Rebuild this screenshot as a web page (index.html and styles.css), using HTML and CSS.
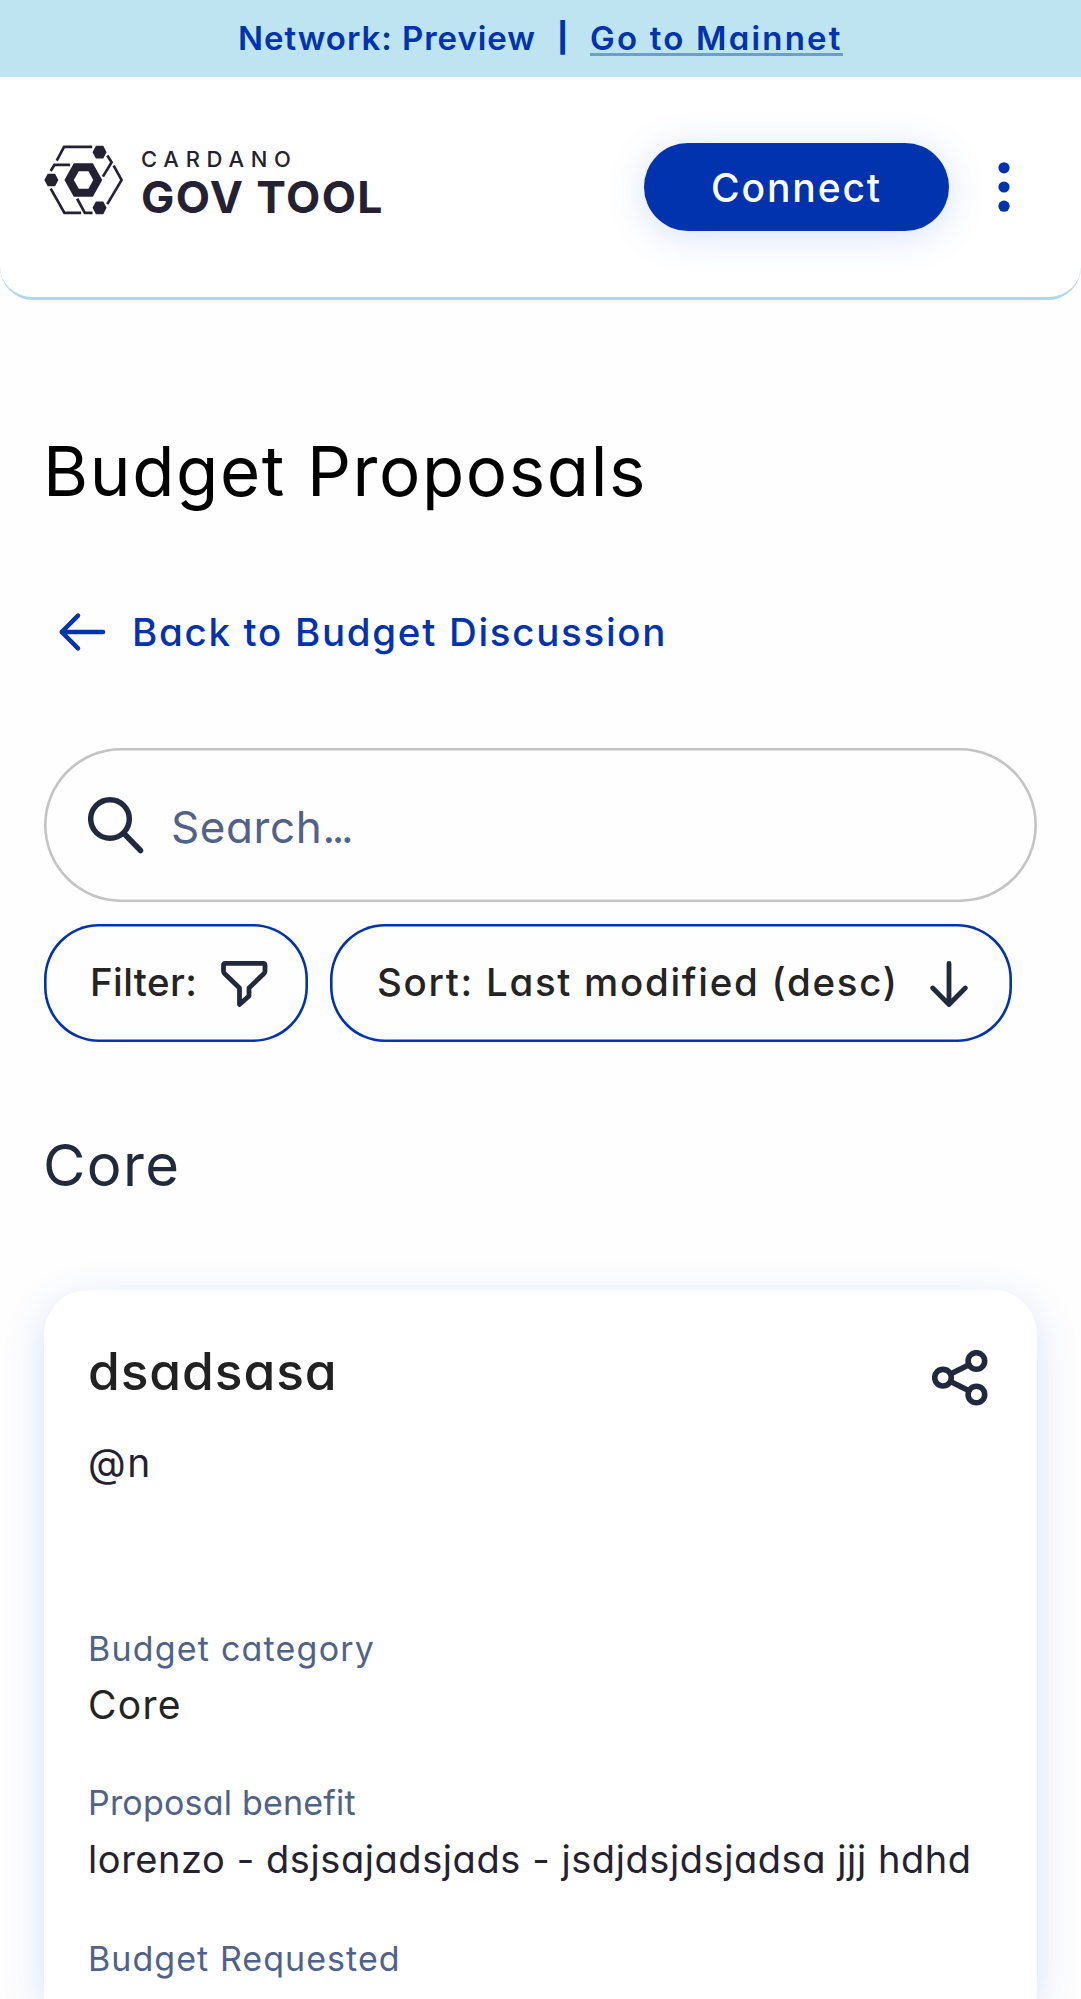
FILE: index.html
```html
<!DOCTYPE html>
<html lang="en">
<head>
<meta charset="utf-8">
<title>Budget Proposals</title>
<link rel="stylesheet" href="styles.css">
</head>
<body>
<div class="banner"><span class="network">Network: Preview</span><span class="divider">|</span><a class="mainnet">Go to Mainnet</a></div>
<header class="header">
  <div class="logo">
    <svg class="logo-mark" viewBox="132 76 236 208" fill="#242232">
      <path fill-rule="evenodd" d="M193 180 221 130H278L306 180 278 230H221ZM221 180 236 206H265L279 180 265 154H236Z"/>
      <path d="M277 97 287 78H309L319 97 309 116H287ZM133 180 143 161H165L175 180 165 199H143ZM277 263 287 244H309L319 263 309 282H287Z"/>
      <path class="logo-lines" d="M170 122 192 81H276M152 153 163 135H210M321 107 334 127 308 170M340 137 364 180 321 252M152 206 193 278H243M231 236 254 278H277"/>
    </svg>
    <div class="logo-text"><span class="logo-top">CARDANO</span><span class="logo-name">GOV TOOL</span></div>
  </div>
  <div class="actions">
    <button class="connect">Connect</button>
    <svg class="dots" viewBox="0 0 12 50" fill="#0033ad"><circle cx="6" cy="5.8" r="5.6"/><circle cx="6" cy="25" r="5.6"/><circle cx="6" cy="44.2" r="5.6"/></svg>
  </div>
</header>
<main class="main">
  <h1 class="title">Budget Proposals</h1>
  <a class="back">
    <svg class="back-icon" viewBox="0 0 48 40"><path d="M45 20H3.700M20 3.700 3.700 20 20 36.300"/></svg>
    <span>Back to Budget Discussion</span>
  </a>
  <div class="search">
    <svg class="search-icon" viewBox="0 0 56 58"><circle cx="22" cy="23" r="19.300"/><path d="M36.500 38 52.500 54.500"/></svg>
    <span class="search-label">Search<span class="dots-text">...</span></span>
  </div>
  <div class="chips">
    <button class="chip filter"><span class="filter-label">Filter:</span>
      <svg class="chip-icon" width="48" viewBox="0 0 48 48"><path d="M5.500 4.300H43Q45 4.300 45 6.300V12Q45 13.500 44 14.500L29 29V37L19.500 45.500V29L4.500 14.500Q3.500 13.500 3.500 12V6.300Q3.500 4.300 5.500 4.300Z"/></svg></button>
    <button class="chip sort"><span class="sort-label">Sort: Last modified (desc)</span>
      <svg class="chip-icon" width="38" viewBox="0 0 38 48"><path d="M19 4.500V45.500M2.700 29 19 45.500 35.300 29"/></svg></button>
  </div>
  <h2 class="section">Core</h2>
  <article class="card">
    <div class="card-head"><h3 class="card-title">dsadsasa</h3>
      <svg class="share" viewBox="0 0 56 56"><circle cx="11" cy="27.700" r="8.300"/><circle cx="44.400" cy="11" r="8.300"/><circle cx="44.400" cy="44.500" r="8.300"/><path d="M19 23.700 37 14.800M19 31.700 37 40.700"/></svg></div>
    <p class="author">@n</p>
    <dl class="fields">
      <dt class="label category">Budget category</dt>
      <dd class="value neutral">Core</dd>
      <dt class="label benefit">Proposal benefit</dt>
      <dd class="value summary">lorenzo - dsjsajadsjads - jsdjdsjdsjadsa jjj hdhd</dd>
      <dt class="label requested">Budget Requested</dt>
    </dl>
  </article>
</main>
</body>
</html>
```
FILE: styles.css
```css
* { box-sizing: border-box; }

body {
  margin: 0;
  width: 1081px;
  height: 1999px;
  overflow: hidden;
  display: flex;
  flex-direction: column;
  background: #fefefe;
  color: #242232;
  font-family: Inter, "Open Sans", sans-serif;
  font-feature-settings: "cv11";
  white-space: nowrap;
}

h1, h2, h3, p, dl, dd { margin: 0; font-weight: 400; }
button { font: inherit; font-feature-settings: inherit; padding: 0; border: 0; }
svg { display: block; flex: none; }
svg path, svg circle { stroke-linecap: round; stroke-linejoin: round; }

/* Network banner */
.banner {
  flex: none;
  height: 77px;
  display: flex;
  align-items: center;
  padding: 0 0 2px 238px;
  background: #bde4f0;
  color: #0033ad;
  font-size: 33px;
  font-weight: 600;
  line-height: 30px;
}
.network { letter-spacing: .96px; }
.divider { flex: none; width: 53px; text-align: center; font-size: 29px; font-weight: 800; }
.mainnet { margin-left: 1px; letter-spacing: 2.2px; box-shadow: 0 3px 0 #6f9bdb; }

/* Header */
.header {
  flex: none;
  height: 223px;
  margin-bottom: -1px;
  padding: 66px 71px 0 44px;
  display: flex;
  justify-content: space-between;
  align-items: flex-start;
  background: #fff;
  border-bottom: 3px solid #add8e6;
  border-radius: 0 0 33px 33px;
}
.logo { display: flex; gap: 18px; padding-top: 2px; }
.logo-mark { width: 79px; height: 70px; }
.logo-mark .logo-lines { fill: none; stroke: #242232; stroke-width: 8; stroke-linecap: butt; stroke-linejoin: miter; }
.logo-text { display: flex; flex-direction: column; }
.logo-top { font-size: 22px; line-height: 28px; font-weight: 500; letter-spacing: 6.7px; }
.logo-name { font-size: 44.5px; line-height: 49px; font-weight: 650; letter-spacing: 1.4px; }
.actions { display: flex; align-items: center; gap: 49px; }
.connect {
  width: 305px;
  height: 88px;
  border-radius: 44px;
  background: #0033ad;
  color: #fff;
  font-size: 39px;
  font-weight: 500;
  letter-spacing: 1.9px;
  box-shadow: 0 5px 38px rgba(47, 98, 220, .2);
}
.dots { width: 12px; height: 50px; }

/* Page content */
.main { flex: 1; min-height: 0; display: flex; flex-direction: column; padding: 127px 44px 0 44px; }
.title { margin-left: -1px; font-size: 69px; line-height: 90px; color: #000; letter-spacing: 1.6px; }
.back {
  display: flex;
  align-items: center;
  gap: 26px;
  height: 60px;
  margin-top: 86px;
  padding-left: 14px;
  color: #0033ad;
  font-size: 38.5px;
  font-weight: 500;
  letter-spacing: 1.7px;
}
.back-icon { width: 48px; height: 40px; fill: none; stroke: #0033ad; stroke-width: 4.5; }

.search {
  height: 154px;
  margin-top: 86px;
  padding-left: 44px;
  border-radius: 77px;
  box-shadow: inset 0 0 0 2.6px #c4c4c4;
  display: flex;
  align-items: center;
  gap: 27px;
  font-size: 44px;
  color: #506288;
}
.search-icon, .chip-icon, .share { fill: none; stroke: #212a3d; }
.search-icon { width: 56px; height: 58px; stroke-width: 5.5; }
.search-label { padding-top: 3px; letter-spacing: .6px; }
.dots-text { letter-spacing: -3.4px; }

.chips { display: flex; gap: 22px; margin-top: 22px; }
.chip {
  height: 118px;
  border-radius: 55px;
  background: transparent;
  box-shadow: inset 0 0 0 2.6px #0033ad;
  display: flex;
  align-items: center;
  justify-content: space-between;
  color: #242424;
  font-size: 38.5px;
  font-weight: 500;
}
.filter { width: 264px; padding: 0 40px 0 46px; }
.sort { width: 682px; padding: 0 44px 0 47px; }
.filter-label { letter-spacing: .4px; padding-bottom: 2px; }
.sort-label { letter-spacing: 1.7px; padding-bottom: 2px; }
.chip-icon { height: 48px; stroke-width: 4.8; }

.section { margin: 93px 0 0 -1px; font-size: 58px; line-height: 60px; color: #212a3d; letter-spacing: 1.4px; }

/* Proposal card */
.card {
  flex: 1;
  min-height: 0;
  margin-top: 95px;
  padding: 51px 49px 0 44px;
  border-radius: 44px 44px 0 0;
  background: #fff;
  box-shadow: 0 11px 41px rgba(47, 88, 220, .18);
}
.card-head { display: flex; justify-content: space-between; height: 60px; }
.card-title { font-size: 51.5px; line-height: 60px; font-weight: 500; color: #212121; letter-spacing: .9px; }
.share { width: 56px; height: 56px; margin-top: 9px; stroke-width: 5.6; }
.author { font-size: 39px; line-height: 50px; margin-top: 37px; letter-spacing: 1.5px; }
.fields { margin-top: 141px; }
.label { font-size: 34px; line-height: 40px; color: #506288; }
.category { letter-spacing: 1.2px; }
.benefit { margin-top: 53px; letter-spacing: .2px; }
.requested { margin-top: 55px; letter-spacing: 1.05px; }
.value { font-size: 38px; line-height: 50px; margin-top: 11px; }
.neutral { color: #242424; font-size: 39px; letter-spacing: 1.3px; }
.summary { letter-spacing: .57px; }
```
